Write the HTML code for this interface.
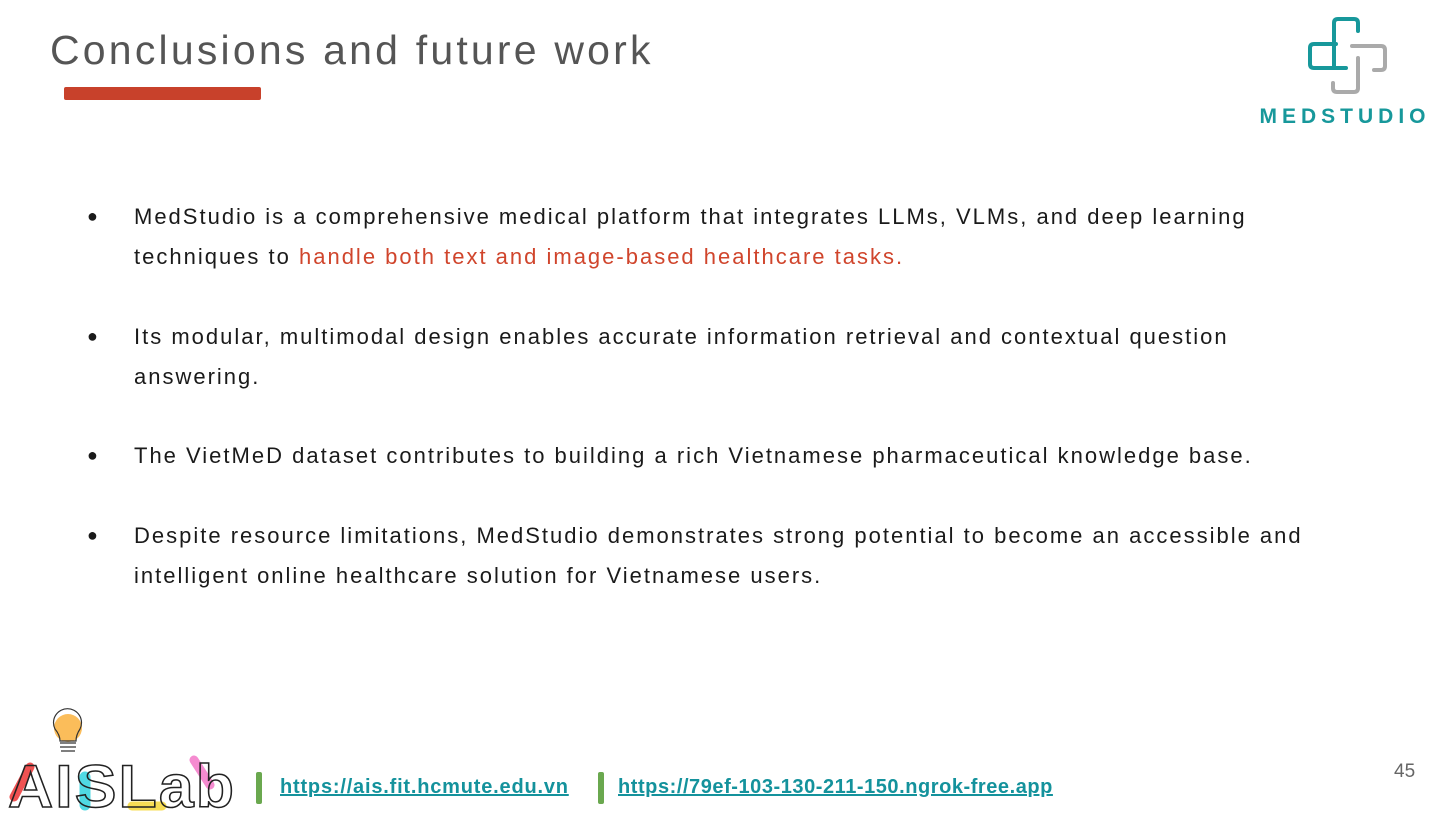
<!DOCTYPE html>
<html><head><meta charset="utf-8"><style>
body{margin:0;width:1449px;height:814px;background:#fff;position:relative;overflow:hidden;font-family:"Liberation Sans",sans-serif}
.t{position:absolute;left:50px;top:27px;font-size:41px;color:#555;letter-spacing:3.2px}
.bar{position:absolute;left:64px;top:87px;width:197px;height:13px;background:#c8412b;border-radius:2px}
.b{position:absolute;left:134px;font-size:22px;color:#1a1a1a;line-height:40px;letter-spacing:2px;white-space:nowrap}
.dot{position:absolute;left:87px;font-size:18px;color:#1a1a1a}
.r{color:#d0452c}
.lk{position:absolute;top:776px;font-size:20px;font-weight:bold;color:#14929c;text-decoration:underline;letter-spacing:0.8px}
.gb{position:absolute;top:772px;width:6px;height:32px;background:#6aa84f;border-radius:2px}
</style></head><body>
<div class="t">Conclusions and future work</div>
<div class="bar"></div>
<svg style="position:absolute;left:1250px;top:10px" width="190" height="120">
<g fill="none" stroke-width="4" stroke-linejoin="round" stroke-linecap="round">
<path d="M84 58 V13 Q84 9 88 9 H104 Q108 9 108 13 V21" stroke="#17989b"/>
<path d="M86 34 H64 Q60 34 60 38 V54 Q60 58 64 58 H96" stroke="#17989b"/>
<path d="M102 36 H131 Q135 36 135 40 V56 Q135 60 131 60 H124" stroke="#aaa"/>
<path d="M108 48 V78 Q108 82 104 82 H87 Q83 82 83 78 V73" stroke="#aaa"/>
</g>
<text x="95" y="113" text-anchor="middle" font-family="Liberation Sans" font-weight="bold" font-size="21" letter-spacing="5" fill="#17989b">MEDSTUDIO</text>
</svg>
<div class="dot" style="top:206px">●</div>
<div class="b" style="top:197px">MedStudio is a comprehensive medical platform that integrates LLMs, VLMs, and deep learning<br>techniques to <span class="r">handle both text and image-based healthcare tasks.</span></div>
<div class="dot" style="top:326px">●</div>
<div class="b" style="top:317px">Its modular, multimodal design enables accurate information retrieval and contextual question<br>answering.</div>
<div class="dot" style="top:445px">●</div>
<div class="b" style="top:436px">The VietMeD dataset contributes to building a rich Vietnamese pharmaceutical knowledge base.</div>
<div class="dot" style="top:525px">●</div>
<div class="b" style="top:516px">Despite resource limitations, MedStudio demonstrates strong potential to become an accessible and<br>intelligent online healthcare solution for Vietnamese users.</div>
<svg style="position:absolute;left:0;top:705px" width="250" height="109">
<circle cx="68" cy="23" r="14" fill="#fbbd5a"/>
<path d="M55 24 A14 14 0 1 1 80 24 Q76 30 76 36 H60 Q60 30 55 24Z" fill="none" stroke="#333" stroke-width="1.2"/>
<path d="M60 38 h16 M60 42 h16 M61 46 h14" stroke="#333" stroke-width="1.2"/>
<path d="M14 92 L30 62" stroke="#f05252" stroke-width="9" stroke-linecap="round"/>
<path d="M85 72 V100" stroke="#4fd9e3" stroke-width="11" stroke-linecap="round"/>
<path d="M132 101 H162" stroke="#f7dd55" stroke-width="9" stroke-linecap="round"/>
<path d="M194 55 L210 80" stroke="#f58bd0" stroke-width="9" stroke-linecap="round"/>
<text x="8" y="102" font-family="Liberation Sans" font-weight="bold" font-size="60" letter-spacing="2" fill="none" stroke="#222" stroke-width="1.5" textLength="228" lengthAdjust="spacingAndGlyphs">AISLab</text>
</svg>
<div class="gb" style="left:256px"></div>
<div class="lk" style="left:280px">https://ais.fit.hcmute.edu.vn</div>
<div class="gb" style="left:598px"></div>
<div class="lk" style="left:618px;letter-spacing:0.55px">https://79ef-103-130-211-150.ngrok-free.app</div>
<div style="position:absolute;left:1394px;top:761px;font-size:19px;color:#666">45</div>
</body></html>
